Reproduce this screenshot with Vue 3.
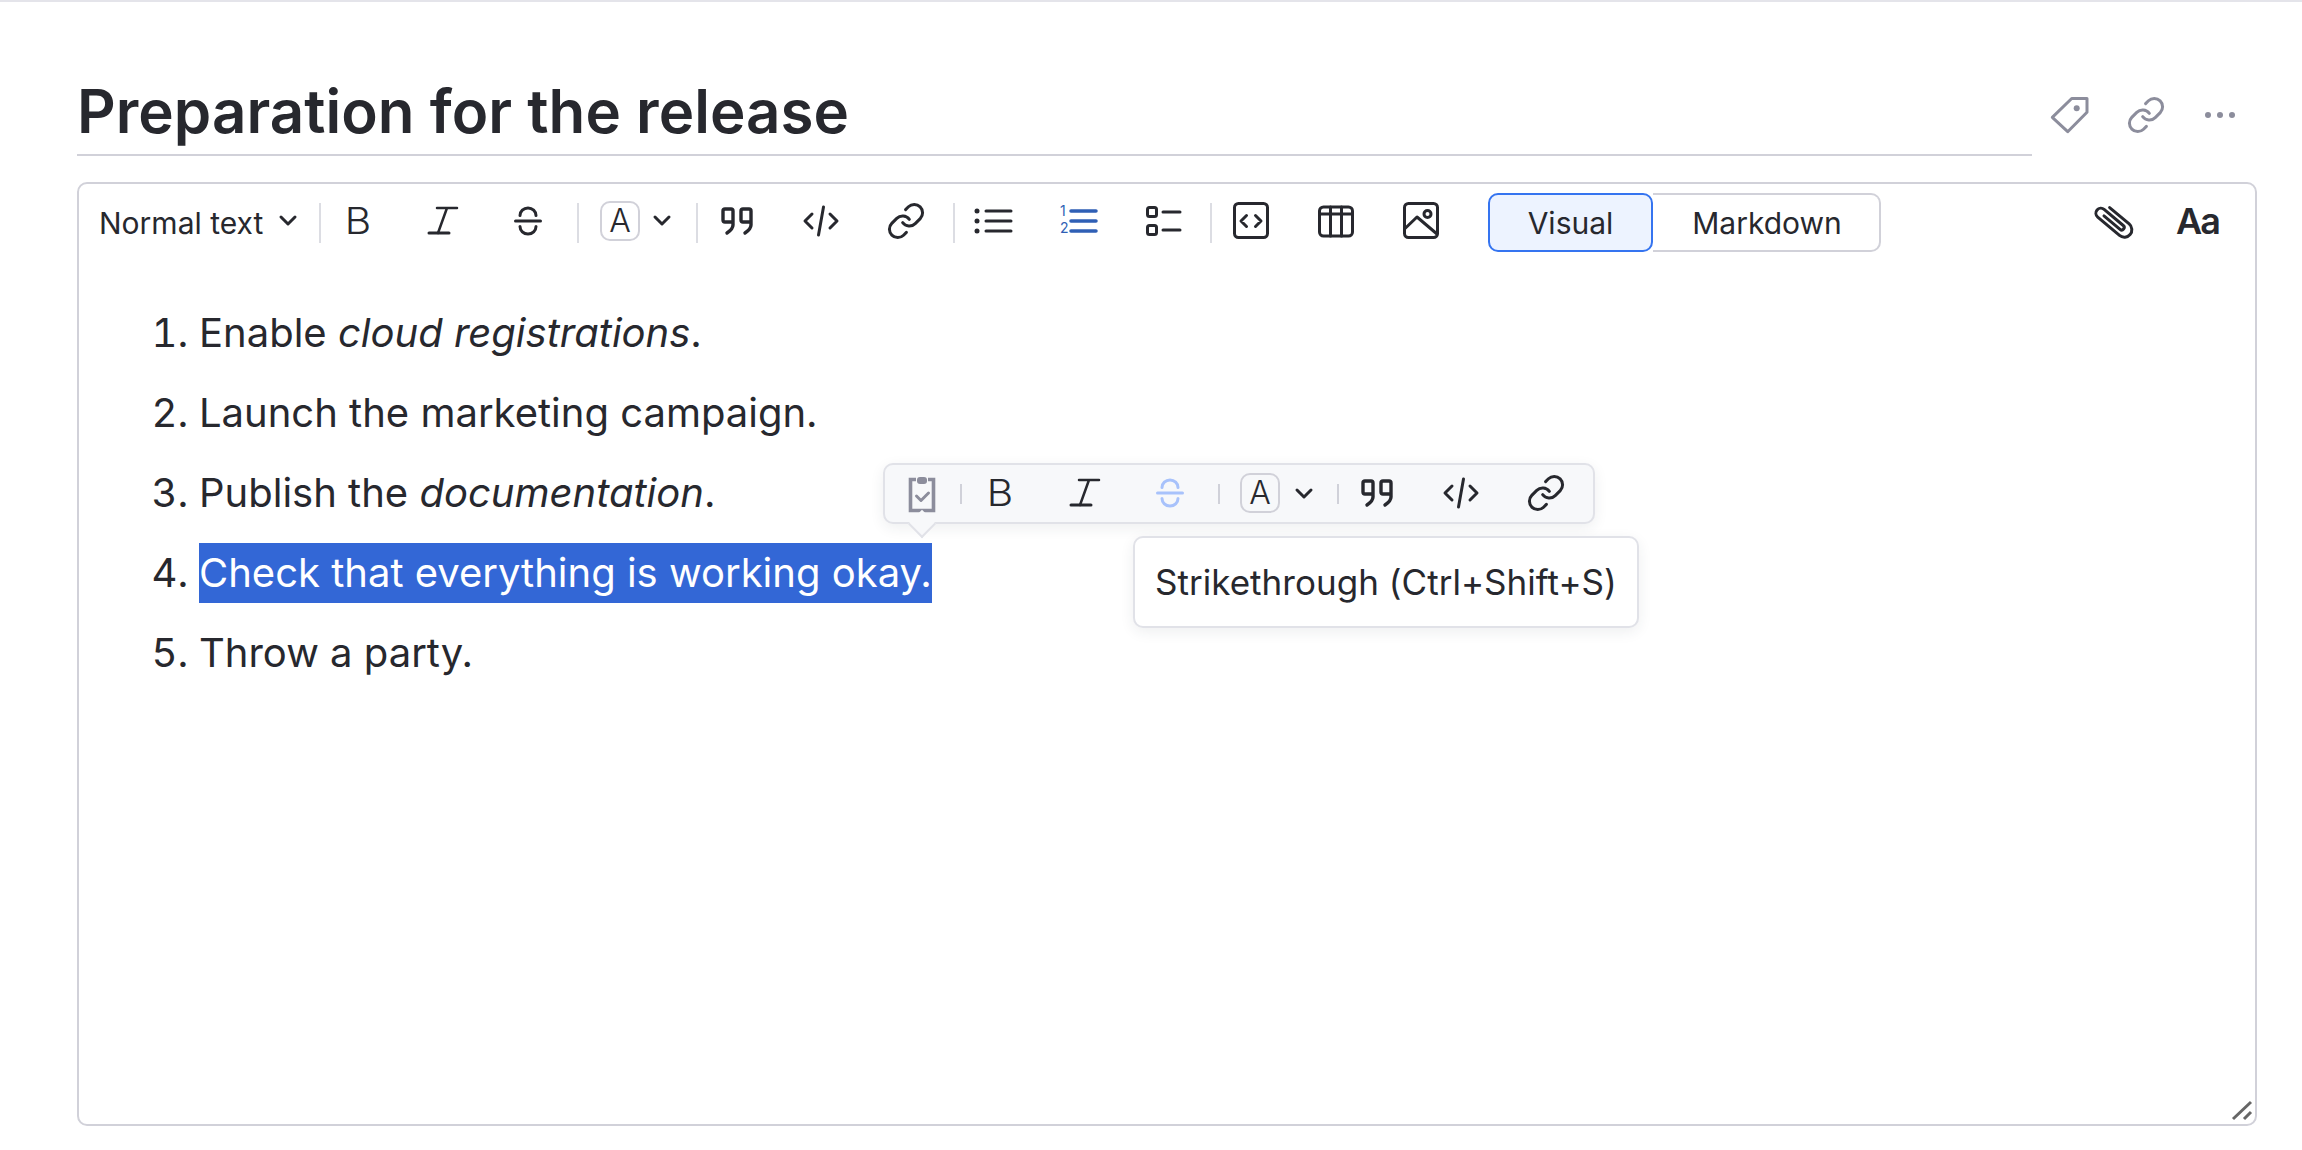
<script setup>
const link = ['M10 13a5 5 0 0 0 7.54.54l3-3a5 5 0 0 0-7.07-7.07l-1.72 1.71', 'M14 11a5 5 0 0 0-7.54-.54l-3 3a5 5 0 0 0 7.07 7.07l1.71-1.71']
const quote = 'M17 21H9a2 2 0 0 1-2-2V10a2 2 0 0 1 2-2h6a2 2 0 0 1 2 2v14q0 4-6 8M35 21H27a2 2 0 0 1-2-2V10a2 2 0 0 1 2-2h6a2 2 0 0 1 2 2v14q0 4-6 8'
const code = 'M11 13l-7 7 7 7M29 13l7 7-7 7M22.5 6l-5 28'
const strike = 'M7.5 20h25M12 14.5a8 7.5 0 0 1 16 0M12 25.5a8 7.5 0 0 0 16 0'
const items = [
  { id: 1, text: 'Enable ', em: 'cloud registrations', after: '.' },
  { id: 2, text: 'Launch the marketing campaign.' },
  { id: 3, text: 'Publish the ', em: 'documentation', after: '.' },
  { id: 4, selected: 'Check that everything is working okay.' },
  { id: 5, text: 'Throw a party.' }
]
</script>

<template>
  <div class="page">
    <header class="head">
      <h1 class="title">Preparation for the release</h1>
      <div class="actions">
        <svg class="ic grey" viewBox="0 0 40 40"><path d="M37 3.5H21.7L2.3 22.3 17.7 36.7 37 17.3z" /><circle cx="26.7" cy="13.3" r="3" class="solid" /></svg>
        <svg class="ic grey" viewBox="0 0 24 24"><path v-for="d in link" :key="d" :d="d" class="thin" /></svg>
        <div class="dots"><i></i><i></i><i></i></div>
      </div>
    </header>

    <section class="editor">
      <div class="bar">
        <span class="style-name">Normal text</span>
        <svg class="chev first" viewBox="0 0 20 20"><path d="M3 6l7 7 7-7" /></svg>
        <span class="sep s1"></span>
        <div class="group g1">
          <span class="ltr b">B</span>
          <svg class="ic" viewBox="0 0 40 40"><path class="slim" d="M14 7h20M24 7l-9 25" /><path d="M6 32h20" /></svg>
          <svg class="ic" viewBox="0 0 40 40"><path :d="strike" /></svg>
        </div>
        <span class="sep s2"></span>
        <span class="abox a1">A</span>
        <svg class="chev c2" viewBox="0 0 20 20"><path d="M3 6l7 7 7-7" /></svg>
        <span class="sep s3"></span>
        <div class="group g2">
          <svg class="ic heavy" viewBox="0 0 40 40"><path :d="quote" /></svg>
          <svg class="ic" viewBox="0 0 40 40"><path :d="code" /></svg>
          <svg class="ic" viewBox="0 0 24 24"><path v-for="d in link" :key="d" :d="d" class="thin" /></svg>
        </div>
        <span class="sep s4"></span>
        <div class="group g3">
          <svg class="ic" viewBox="0 0 40 40"><path d="M13 10h25M13 20h25M13 30h25" /><circle cx="4" cy="10" r="2.5" class="solid" /><circle cx="4" cy="20" r="2.5" class="solid" /><circle cx="4" cy="30" r="2.5" class="solid" /></svg>
          <svg class="ic blue" viewBox="0 0 40 40"><path d="M13 10h25M13 20h25M13 30h25" /><text x="2" y="15" class="num">1</text><text x="2" y="32" class="num">2</text></svg>
          <svg class="ic" viewBox="0 0 40 40"><rect x="4.5" y="6.5" width="9" height="9" rx="2" /><rect x="4.5" y="24.5" width="9" height="9" rx="2" /><path d="M20 11h17M20 29h17" /></svg>
        </div>
        <span class="sep s5"></span>
        <div class="group g4">
          <svg class="ic" viewBox="0 0 40 40"><rect x="3.5" y="2.5" width="33" height="34" rx="4" /><path d="M15.5 14.5l-5.5 5.5 5.5 5.5M24.5 14.5l5.5 5.5-5.5 5.5" /></svg>
          <svg class="ic" viewBox="0 0 40 40"><rect x="3.5" y="6" width="33" height="29" rx="4" /><path d="M3.5 13h33M14.5 6v29M25.5 6v29" /></svg>
          <svg class="ic" viewBox="0 0 40 40"><rect x="3.5" y="2.5" width="33" height="34" rx="4" /><path d="M3.5 28L16 16l20 17" /><circle cx="26.5" cy="13" r="3.5" /></svg>
        </div>
        <div class="seg">
          <button class="seg-btn on">Visual</button>
          <button class="seg-btn off">Markdown</button>
        </div>
        <svg class="ic clip" viewBox="0 0 40 40"><g transform="rotate(-50 20 20)"><path d="M27.5 8V33.5a7.5 7.5 0 0 1-15 0V5a5 5 0 0 1 10 0V30a2.5 2.5 0 0 1-5 0V9" /></g></svg>
        <span class="aa">Aa</span>
      </div>

      <ol class="list">
        <li v-for="it in items" :key="it.id">
          <span v-if="it.selected" class="picked">{{ it.selected }}</span>
          <template v-else>{{ it.text }}<em v-if="it.em">{{ it.em }}</em>{{ it.after }}</template>
        </li>
      </ol>

      <svg class="grip" viewBox="0 0 24 24"><path d="M2 19L20 2M13 19l7-7" /></svg>
    </section>

    <div class="float">
      <svg class="ic grey f-clip" viewBox="0 0 40 40"><path class="board" d="M14 5.5H8.5V36.5H31.5V5.5H26" /><path d="M14.5 22l4.5 4.5 7.5-7.5" /><rect x="15" y="3" width="10" height="7" rx="3" class="solid" /></svg>
      <span class="fsep fs1"></span>
      <div class="group f1">
        <span class="ltr b">B</span>
        <svg class="ic" viewBox="0 0 40 40"><path class="slim" d="M14 7h20M24 7l-9 25" /><path d="M6 32h20" /></svg>
        <svg class="ic pale" viewBox="0 0 40 40"><path :d="strike" /></svg>
      </div>
      <span class="fsep fs2"></span>
      <span class="abox a2">A</span>
      <svg class="chev c3" viewBox="0 0 20 20"><path d="M3 6l7 7 7-7" /></svg>
      <span class="fsep fs3"></span>
      <div class="group f2">
        <svg class="ic heavy" viewBox="0 0 40 40"><path :d="quote" /></svg>
        <svg class="ic" viewBox="0 0 40 40"><path :d="code" /></svg>
        <svg class="ic" viewBox="0 0 24 24"><path v-for="d in link" :key="d" :d="d" class="thin" /></svg>
      </div>
      <span class="arrow"></span>
    </div>

    <div class="tip">Strikethrough (Ctrl+Shift+S)</div>
  </div>
</template>

<style>
html, body { margin: 0; background: #fff; }
</style>

<style scoped>
.page {
  position: relative;
  box-sizing: border-box;
  height: 1150px;
  border-top: 2px solid #e4e4ea;
  padding: 0 45px 0 77px;
  font-family: Inter, "Noto Sans", sans-serif;
  color: #27282e;
  overflow: hidden;
}
.head { display: flex; align-items: flex-start; height: 180px; }
.title {
  flex: none;
  width: 1955px;
  height: 154px;
  box-sizing: border-box;
  margin: 0;
  padding-top: 71px;
  border-bottom: 2px solid #d1d1d9;
  font-size: 60px;
  line-height: 76px;
  font-weight: 600;
  letter-spacing: 0.05px;
}
.actions { display: flex; align-items: center; margin: 93px 0 0 18px; gap: 36px; }
.dots { display: flex; gap: 6px; margin-left: 3px; }
.dots i { width: 6px; height: 6px; border-radius: 50%; background: #8c8d9c; }

.ic { flex: none; width: 40px; height: 40px; overflow: visible; fill: none; stroke: #27282e; color: #27282e; stroke-width: 3; stroke-linecap: round; stroke-linejoin: round; }
.ic .thin { stroke-width: 1.8; }
.ic .slim { stroke-width: 2.5; }
.heavy { stroke-width: 3.4; }
.ic .solid { fill: currentColor; stroke: none; }
.ic .board { stroke-width: 3.6; stroke-linecap: butt; stroke-linejoin: miter; }
.grey { stroke: #8c8d9c; color: #8c8d9c; }
.blue { stroke: #2f5fb5; }
.blue path { stroke-width: 3.5; }
.pale { stroke: #a8c2fb; }
.num { fill: #2f5fb5; stroke: none; font-size: 14px; font-family: Inter, sans-serif; }

.editor {
  position: relative;
  box-sizing: border-box;
  width: 2180px;
  height: 944px;
  border: 2px solid #d1d1d9;
  border-radius: 10px;
}
.bar { display: flex; align-items: center; height: 77px; padding: 0 0 0 21px; }
.bar .ic, .bar .ltr, .bar .abox, .bar .chev, .bar .aa { margin-bottom: 4px; }
.group { display: flex; align-items: center; gap: 45px; flex: none; }
.style-name { flex: none; width: 164px; margin-left: -1px; font-size: 30px; line-height: 40px; white-space: nowrap; }
.chev { flex: none; width: 20px; height: 20px; fill: none; stroke: #27282e; stroke-width: 3; stroke-linecap: round; stroke-linejoin: round; }
.first { margin-left: 15px; }
.sep { flex: none; width: 2px; height: 40px; background: #dcdde3; }
.s1 { margin-left: 21px; }
.g1 { margin-left: 17px; }
.s2 { margin-left: 29px; }
.a1 { margin-left: 21px; }
.c2 { margin-left: 12px; }
.s3 { margin-left: 24px; }
.g2 { margin-left: 18px; }
.s4 { margin-left: 27px; }
.g3 { margin-left: 18px; }
.s5 { margin-left: 27px; }
.g4 { margin-left: 19px; }
.seg { display: flex; flex: none; margin-left: 47px; }
.seg-btn {
  box-sizing: border-box;
  height: 59px;
  background: #fff;
  font: 400 30px/1 Inter, sans-serif;
  color: #27282e;
  padding: 0;
}
.on { width: 165px; border: 2px solid #3574f0; background: #edf3ff; border-radius: 10px; }
.off { width: 228px; padding-left: 2px; border: 2px solid #d1d1d9; border-left: 0; border-radius: 0 10px 10px 0; }
.clip { margin-left: 213px; }
.aa { flex: none; margin-left: 42px; font-size: 36px; font-weight: 600; line-height: 40px; letter-spacing: -2px; }

.ltr { flex: none; width: 40px; height: 40px; text-align: center; font-size: 37px; font-weight: 300; line-height: 40px; }
.b { transform: scaleX(1.1); }
.abox {
  flex: none;
  box-sizing: border-box;
  width: 40px;
  height: 40px;
  border: 2px solid #d1d1d9;
  border-radius: 10px;
  text-align: center;
  font-size: 32px;
  font-weight: 300;
  line-height: 36px;
}

.list { margin: 0; padding: 42px 0 0 120px; font-size: 40px; line-height: 60px; list-style: decimal; }
.list li { margin-bottom: 20px; }
.list em { font-style: italic; }
.picked { display: inline-block; background: #3367d6; color: #fff; }
.grip { position: absolute; right: 0; bottom: 0; width: 24px; height: 24px; fill: none; stroke: #666; stroke-width: 3; }

.float {
  position: absolute;
  left: 883px;
  top: 461px;
  box-sizing: border-box;
  width: 712px;
  height: 61px;
  display: flex;
  align-items: center;
  background: #f7f8fa;
  border: 2px solid #e1e2e8;
  border-radius: 10px;
  box-shadow: 0 4px 14px rgba(40, 45, 70, 0.08);
}
.float .ltr, .float .abox, .float .group .ic { margin-bottom: 2px; }
.f-clip { margin-left: 17px; }
.fsep { flex: none; width: 2px; height: 20px; background: #d0d1d9; }
.fs1 { margin-left: 18px; }
.f1 { margin-left: 18px; }
.fs2 { margin-left: 28px; }
.a2 { margin-left: 20px; }
.c3 { margin-left: 14px; }
.fs3 { margin-left: 23px; }
.f2 { margin-left: 17px; }
.arrow {
  position: absolute;
  left: 27px;
  bottom: -12px;
  width: 20px;
  height: 20px;
  box-sizing: border-box;
  background: #f7f8fa;
  border-right: 2px solid #e1e2e8;
  border-bottom: 2px solid #e1e2e8;
  transform: rotate(45deg);
}
.tip {
  position: absolute;
  left: 1133px;
  top: 534px;
  box-sizing: border-box;
  width: 506px;
  height: 92px;
  padding-left: 20px;
  background: #fff;
  border: 2px solid #e1e2e8;
  border-radius: 10px;
  font-size: 35px;
  line-height: 88px;
  letter-spacing: 0.03px;
  box-shadow: 0 4px 14px rgba(40, 45, 70, 0.08);
  white-space: nowrap;
}
</style>
